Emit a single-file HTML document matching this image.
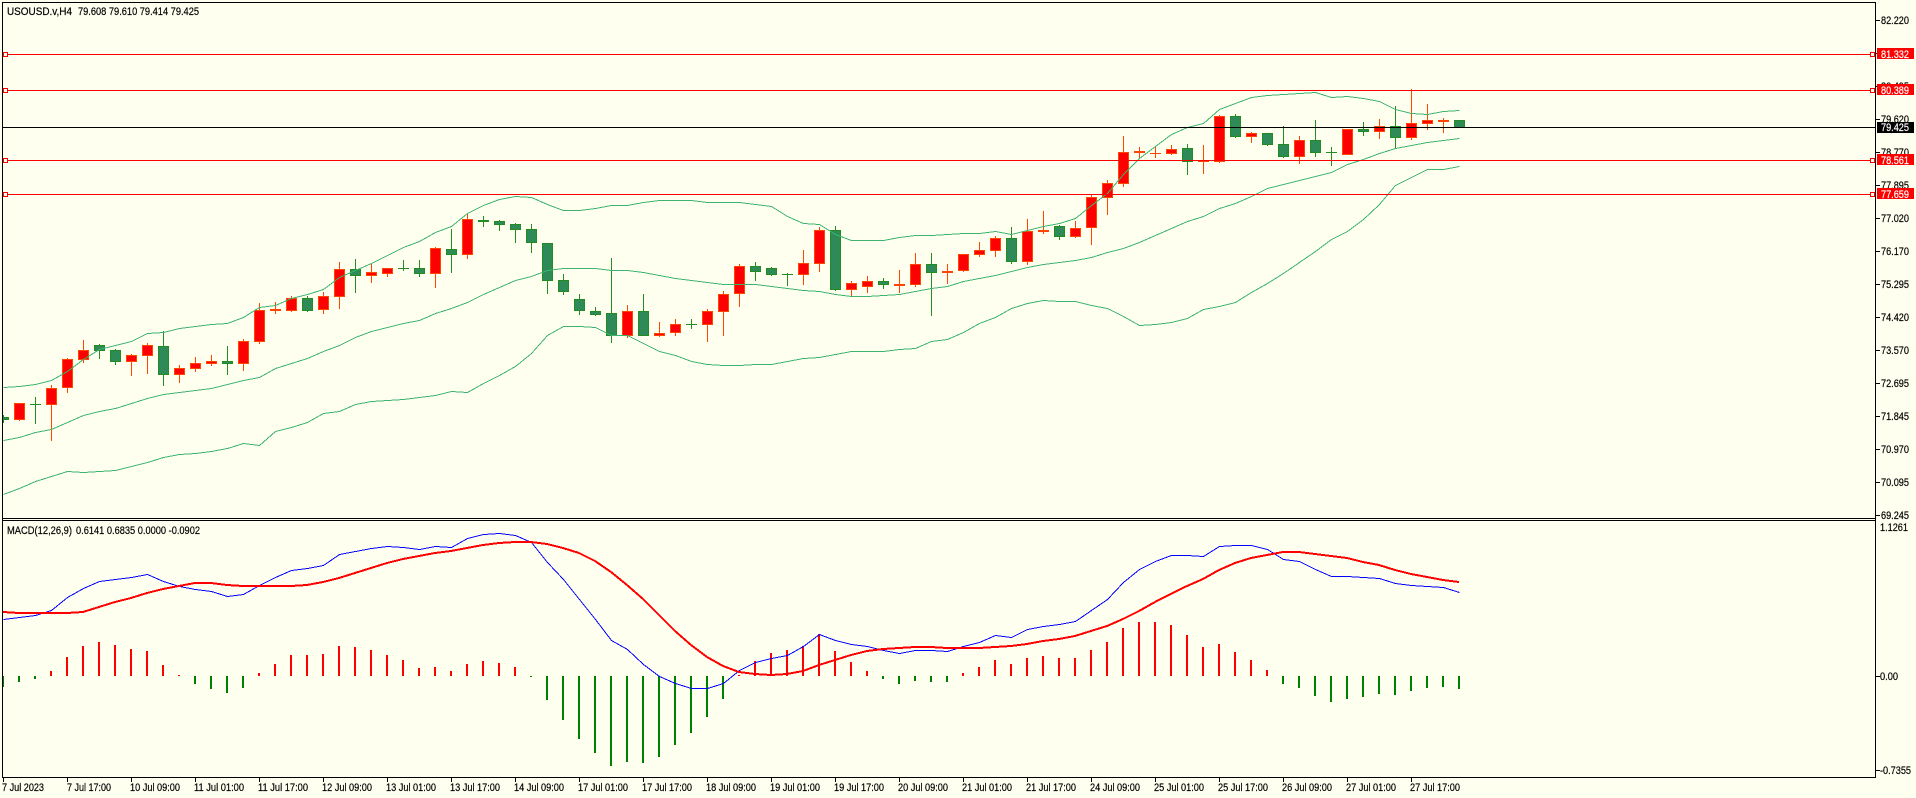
<!DOCTYPE html>
<html lang="en">
<head>
<meta charset="utf-8">
<title>USOUSD.v,H4</title>
<style>
html,body{margin:0;padding:0;background:#FFFFF0;width:1916px;height:798px;overflow:hidden}
svg{display:block}
text{font-family:"Liberation Sans",Arial,sans-serif;font-size:11px;fill:#000;stroke:#000;stroke-width:.2px}
.w text{fill:#fff;stroke:#fff}
</style>
</head>
<body>
<svg xmlns="http://www.w3.org/2000/svg" width="1916" height="798" viewBox="0 0 1916 798">
<defs>
<clipPath id="cm"><rect x="3" y="3" width="1872" height="515"/></clipPath>
<clipPath id="cd"><rect x="3" y="521" width="1872" height="256"/></clipPath>
</defs>
<rect width="1916" height="798" fill="#FFFFF0"/>

<g clip-path="url(#cm)" shape-rendering="crispEdges" fill="none">
<path stroke="#228B22" d="M3.5 415V423M35.5 397V424M99.5 344V359M115.5 349V365M163.5 331V386M227.5 346V375M307.5 296V312M355.5 259V293M403.5 260V271M419.5 260V277M451.5 229V273M483.5 216V227M499.5 220V231M515.5 223V243M531.5 224V253M547.5 243V294M563.5 274V295M579.5 294V315M595.5 307V316M611.5 258V343M643.5 294V336M691.5 319V329M755.5 262V281M771.5 267V276M787.5 273V286M835.5 226V291M883.5 278V289M931.5 253V316M1011.5 227V264M1059.5 225V240M1187.5 144V175M1235.5 114V138M1267.5 133V146M1283.5 126V158M1315.5 120V157M1331.5 147V166M1363.5 122V136M1395.5 106V148M1459.5 120V128M30 404.5h11M398 268.5h11M686 324.5h11M782 274.5h11M1326 152.5h11"/>
<path stroke="#FF4500" d="M19.5 403V421M51.5 385V441M67.5 358V393M83.5 340V363M131.5 354V376M147.5 343V374M179.5 365V383M195.5 357V372M211.5 355V366M243.5 339V371M259.5 303V344M275.5 302V314M291.5 296V312M323.5 292V314M339.5 262V309M371.5 263V283M387.5 268V277M435.5 247V288M467.5 213V259M627.5 305V338M659.5 322V337M675.5 319V336M707.5 309V342M723.5 291V336M739.5 264V307M803.5 250V285M819.5 227V272M851.5 281V296M867.5 276V293M899.5 270V293M915.5 253V287M947.5 264V284M963.5 254V272M979.5 242V257M995.5 236V257M1027.5 219V265M1043.5 211V234M1075.5 221V238M1091.5 194V245M1107.5 180V215M1123.5 136V187M1139.5 147V159M1155.5 146V158M1171.5 145V155M1203.5 145V174M1219.5 115V163M1251.5 132V143M1299.5 136V164M1347.5 129V155M1379.5 119V139M1411.5 89V140M1427.5 104V130M1443.5 118V133M1150 153.5h11M1198 161.5h11"/>
<path fill="#2E8B57" stroke="#228B22" d="M-1.5 417.5h10v2h-10zM94.5 345.5h10v5h-10zM110.5 350.5h10v11h-10zM158.5 346.5h10v28h-10zM222.5 361.5h10v2h-10zM302.5 298.5h10v12h-10zM350.5 269.5h10v6h-10zM414.5 268.5h10v5h-10zM446.5 249.5h10v5h-10zM478.5 220.5h10v1h-10zM494.5 221.5h10v3h-10zM510.5 224.5h10v5h-10zM526.5 229.5h10v13h-10zM542.5 243.5h10v37h-10zM558.5 280.5h10v11h-10zM574.5 299.5h10v11h-10zM590.5 311.5h10v3h-10zM606.5 313.5h10v22h-10zM638.5 311.5h10v24h-10zM750.5 266.5h10v5h-10zM766.5 268.5h10v6h-10zM830.5 230.5h10v59h-10zM878.5 281.5h10v3h-10zM926.5 264.5h10v8h-10zM1006.5 238.5h10v23h-10zM1054.5 226.5h10v10h-10zM1182.5 148.5h10v13h-10zM1230.5 116.5h10v20h-10zM1262.5 133.5h10v11h-10zM1278.5 144.5h10v12h-10zM1310.5 140.5h10v12h-10zM1358.5 129.5h10v2h-10zM1390.5 126.5h10v11h-10zM1454.5 120.5h10v7h-10z"/>
<path fill="#FF0000" stroke="#FF4500" d="M14.5 403.5h10v16h-10zM46.5 388.5h10v16h-10zM62.5 359.5h10v28h-10zM78.5 350.5h10v9h-10zM126.5 355.5h10v6h-10zM142.5 345.5h10v10h-10zM174.5 368.5h10v6h-10zM190.5 363.5h10v5h-10zM206.5 361.5h10v2h-10zM238.5 341.5h10v22h-10zM254.5 310.5h10v31h-10zM270.5 309.5h10v1h-10zM286.5 298.5h10v12h-10zM318.5 296.5h10v13h-10zM334.5 269.5h10v27h-10zM366.5 272.5h10v3h-10zM382.5 268.5h10v5h-10zM430.5 248.5h10v25h-10zM462.5 219.5h10v35h-10zM622.5 311.5h10v24h-10zM654.5 333.5h10v2h-10zM670.5 324.5h10v8h-10zM702.5 311.5h10v13h-10zM718.5 294.5h10v17h-10zM734.5 266.5h10v27h-10zM798.5 263.5h10v11h-10zM814.5 230.5h10v33h-10zM846.5 283.5h10v6h-10zM862.5 281.5h10v5h-10zM894.5 284.5h10v1h-10zM910.5 264.5h10v20h-10zM942.5 271.5h10v1h-10zM958.5 254.5h10v16h-10zM974.5 250.5h10v4h-10zM990.5 238.5h10v12h-10zM1022.5 231.5h10v30h-10zM1038.5 230.5h10v1h-10zM1070.5 228.5h10v8h-10zM1086.5 197.5h10v30h-10zM1102.5 183.5h10v14h-10zM1118.5 152.5h10v31h-10zM1134.5 151.5h10v1h-10zM1166.5 149.5h10v4h-10zM1214.5 116.5h10v45h-10zM1246.5 133.5h10v3h-10zM1294.5 140.5h10v16h-10zM1342.5 129.5h10v25h-10zM1374.5 126.5h10v5h-10zM1406.5 123.5h10v14h-10zM1422.5 120.5h10v3h-10zM1438.5 120.5h10v1h-10z"/>
<g stroke="#3CB371" transform="translate(.5 .5)">
<polyline points="3,387 19,386 35,384 51,380 67,371 83,359 99,349 115,345 131,341 147,333 163,332 179,328 195,326 211,324 227,323 243,317 259,307 275,305 291,298 307,294 323,289 339,277 355,270 371,263 387,255 403,247 419,241 435,232 451,226 467,213 483,205 499,199 515,196 531,197 547,204 563,210 579,210 595,208 611,205 627,205 643,202 659,200 675,200 691,200 707,202 723,202 739,202 755,204 771,206 787,216 803,223 819,224 835,234 851,240 867,240 883,240 899,237 915,235 931,235 947,234 963,233 979,233 995,231 1011,234 1027,230 1043,226 1059,223 1075,218 1091,205 1107,193 1123,174 1139,158 1155,146 1171,134 1187,127 1203,123 1219,109 1235,103 1251,97 1267,95 1283,94 1299,93 1315,92 1331,97 1347,96 1363,98 1379,101 1395,109 1411,113 1427,114 1443,111 1459,110"/>
<polyline points="3,440 19,437 35,432 51,429 67,422 83,415 99,411 115,408 131,403 147,398 163,394 179,392 195,390 211,388 227,384 243,380 259,377 275,368 291,363 307,358 323,351 339,345 355,337 371,331 387,327 403,323 419,320 435,313 451,308 467,302 483,294 499,287 515,280 531,276 547,270 563,268 579,268 595,268 611,270 627,270 643,272 659,275 675,278 691,280 707,282 723,284 739,284 755,284 771,286 787,288 803,290 819,291 835,294 851,296 867,296 883,295 899,294 915,291 931,288 947,286 963,281 979,278 995,275 1011,271 1027,267 1043,264 1059,262 1075,260 1091,257 1107,252 1123,248 1139,242 1155,235 1171,228 1187,221 1203,216 1219,208 1235,203 1251,196 1267,188 1283,184 1299,180 1315,176 1331,172 1347,164 1363,159 1379,153 1395,148 1411,145 1427,142 1443,140 1459,138"/>
<polyline points="3,494 19,488 35,481 51,476 67,471 83,472 99,471 115,470 131,466 147,462 163,457 179,454 195,453 211,451 227,448 243,443 259,445 275,431 291,427 307,422 323,413 339,411 355,404 371,401 387,400 403,399 419,397 435,395 451,391 467,392 483,383 499,375 515,366 531,353 547,335 563,326 579,326 595,327 611,335 627,335 643,343 659,351 675,355 691,361 707,364 723,365 739,365 755,364 771,364 787,361 803,358 819,357 835,354 851,351 867,351 883,351 899,349 915,348 931,341 947,339 963,332 979,323 995,317 1011,308 1027,303 1043,300 1059,301 1075,301 1091,305 1107,308 1123,316 1139,325 1155,324 1171,322 1187,318 1203,309 1219,306 1235,302 1251,292 1267,283 1283,273 1299,262 1315,251 1331,239 1347,231 1363,219 1379,204 1395,185 1411,177 1427,169 1443,169 1459,166"/>
</g>
<path stroke="#FF0000" d="M3 54.5H1875M3 90.5H1875M3 160.5H1875M3 194.5H1875"/>
<path stroke="#000" d="M3 127.5H1875"/>
<path fill="#FFFFF0" stroke="#FF0000" d="M3.5 52.5h4v4h-4zM3.5 88.5h4v4h-4zM3.5 158.5h4v4h-4zM3.5 192.5h4v4h-4zM1870.5 52.5h4v4h-4zM1870.5 88.5h4v4h-4zM1870.5 158.5h4v4h-4zM1870.5 192.5h4v4h-4z"/>
</g>

<g clip-path="url(#cd)" shape-rendering="crispEdges" fill="none">
<path stroke="#008000" stroke-width="2" d="M3 676V687M19 676V682M35 676V679M195 676V684M211 676V689M227 676V693M243 676V688M531 676V677M547 676V700M563 676V720M579 676V739M595 676V753M611 676V766M627 676V762M643 676V763M659 676V757M675 676V745M691 676V733M707 676V717M723 676V699M883 676V679M899 676V684M915 676V681M931 676V682M947 676V682M1283 676V684M1299 676V688M1315 676V696M1331 676V702M1347 676V699M1363 676V697M1379 676V694M1395 676V695M1411 676V691M1427 676V688M1443 676V687M1459 676V689"/>
<path stroke="#FF0000" stroke-width="2" d="M51 676V671M67 676V657M83 676V646M99 676V642M115 676V645M131 676V649M147 676V651M163 676V665M179 676V675M259 676V673M275 676V664M291 676V655M307 676V655M323 676V654M339 676V646M355 676V647M371 676V650M387 676V655M403 676V660M419 676V668M435 676V667M451 676V671M467 676V664M483 676V661M499 676V663M515 676V667M739 676V675M755 676V661M771 676V653M787 676V650M803 676V646M819 676V634M835 676V651M851 676V662M867 676V671M963 676V673M979 676V667M995 676V660M1011 676V664M1027 676V658M1043 676V656M1059 676V658M1075 676V658M1091 676V650M1107 676V642M1123 676V628M1139 676V622M1155 676V622M1171 676V625M1187 676V635M1203 676V647M1219 676V644M1235 676V652M1251 676V660M1267 676V670"/>
<polyline stroke="#0000FF" transform="translate(.5 .5)" points="3,619 19,617 35,615 51,610 67,597 83,588 99,581 115,579 131,577 147,574 163,581 179,586 195,589 211,591 227,596 243,594 259,585 275,577 291,570 307,568 323,565 339,554 355,551 371,548 387,546 403,547 419,549 435,546 451,547 467,538 483,534 499,533 515,535 531,542 547,562 563,579 579,599 595,619 611,640 627,649 643,664 659,676 675,683 691,688 707,688 723,683 739,670 755,662 771,658 787,655 803,646 819,634 835,640 851,644 867,646 883,650 899,653 915,650 931,650 947,651 963,646 979,642 995,635 1011,637 1027,629 1043,626 1059,624 1075,621 1091,610 1107,599 1123,582 1139,569 1155,561 1171,555 1187,555 1203,556 1219,546 1235,545 1251,545 1267,549 1283,559 1299,561 1315,569 1331,576 1347,576 1363,577 1379,578 1395,583 1411,585 1427,586 1443,587 1459,592"/>
<polyline stroke="#FF0000" stroke-width="2" points="3,612 19,613 35,613 51,613 67,613 83,612 99,607 115,602 131,598 147,593 163,589 179,586 195,583 211,583 227,585 243,586 259,586 275,586 291,586 307,585 323,582 339,578 355,573 371,568 387,563 403,559 419,556 435,553 451,551 467,548 483,545 499,543 515,542 531,542 547,544 563,548 579,553 595,561 611,572 627,585 643,599 659,615 675,631 691,645 707,657 723,666 739,672 755,674 771,675 787,674 803,671 819,665 835,660 851,655 867,651 883,649 899,648 915,647 931,647 947,648 963,648 979,648 995,647 1011,646 1027,644 1043,641 1059,639 1075,636 1091,631 1107,626 1123,619 1139,611 1155,602 1171,594 1187,586 1203,579 1219,570 1235,563 1251,558 1267,555 1283,552 1299,552 1315,554 1331,556 1347,558 1363,562 1379,565 1395,570 1411,574 1427,577 1443,580 1459,582"/>
</g>

<g shape-rendering="crispEdges" fill="none" stroke="#000">
<path d="M2 2.5H1876M2 518.5H1876M2 520.5H1876M2 777.5H1876M2.5 2V778M1875.5 2V778"/>
<path d="M1876 20.5h4M1876 53.5h4M1876 86.5h4M1876 119.5h4M1876 152.5h4M1876 185.5h4M1876 218.5h4M1876 251.5h4M1876 284.5h4M1876 317.5h4M1876 350.5h4M1876 383.5h4M1876 416.5h4M1876 449.5h4M1876 482.5h4M1876 515.5h4M1876 676.5h4M1876 770.5h4"/>
<path d="M3.5 778v4M67.5 778v4M131.5 778v4M195.5 778v4M259.5 778v4M323.5 778v4M387.5 778v4M451.5 778v4M515.5 778v4M579.5 778v4M643.5 778v4M707.5 778v4M771.5 778v4M835.5 778v4M899.5 778v4M963.5 778v4M1027.5 778v4M1091.5 778v4M1155.5 778v4M1219.5 778v4M1283.5 778v4M1347.5 778v4M1411.5 778v4"/>
</g>

<g>
<text x="7" y="15" textLength="65" lengthAdjust="spacingAndGlyphs">USOUSD.v,H4</text>
<text x="78" y="15" textLength="121" lengthAdjust="spacingAndGlyphs">79.608 79.610 79.414 79.425</text>
<text x="7" y="534" textLength="65" lengthAdjust="spacingAndGlyphs">MACD(12,26,9)</text>
<text x="76" y="534" textLength="124" lengthAdjust="spacingAndGlyphs">0.6141 0.6835 0.0000 -0.0902</text>
</g>

<g>
<text x="1881" y="24" textLength="28" lengthAdjust="spacingAndGlyphs">82.220</text>
<text x="1881" y="57" textLength="28" lengthAdjust="spacingAndGlyphs">81.345</text>
<text x="1881" y="90" textLength="28" lengthAdjust="spacingAndGlyphs">80.495</text>
<text x="1881" y="123" textLength="28" lengthAdjust="spacingAndGlyphs">79.620</text>
<text x="1881" y="156" textLength="28" lengthAdjust="spacingAndGlyphs">78.770</text>
<text x="1881" y="189" textLength="28" lengthAdjust="spacingAndGlyphs">77.895</text>
<text x="1881" y="222" textLength="28" lengthAdjust="spacingAndGlyphs">77.020</text>
<text x="1881" y="255" textLength="28" lengthAdjust="spacingAndGlyphs">76.170</text>
<text x="1881" y="288" textLength="28" lengthAdjust="spacingAndGlyphs">75.295</text>
<text x="1881" y="321" textLength="28" lengthAdjust="spacingAndGlyphs">74.420</text>
<text x="1881" y="354" textLength="28" lengthAdjust="spacingAndGlyphs">73.570</text>
<text x="1881" y="387" textLength="28" lengthAdjust="spacingAndGlyphs">72.695</text>
<text x="1881" y="420" textLength="28" lengthAdjust="spacingAndGlyphs">71.845</text>
<text x="1881" y="453" textLength="28" lengthAdjust="spacingAndGlyphs">70.970</text>
<text x="1881" y="486" textLength="28" lengthAdjust="spacingAndGlyphs">70.095</text>
<text x="1881" y="519" textLength="28" lengthAdjust="spacingAndGlyphs">69.245</text>
<text x="1880" y="531" textLength="28" lengthAdjust="spacingAndGlyphs">1.1261</text>
<text x="1880" y="680" textLength="18" lengthAdjust="spacingAndGlyphs">0.00</text>
<text x="1880" y="774" textLength="31" lengthAdjust="spacingAndGlyphs">-0.7355</text>
</g>

<g shape-rendering="crispEdges">
<rect x="1877" y="48" width="37" height="11" fill="#FF0000"/>
<rect x="1877" y="84" width="37" height="11" fill="#FF0000"/>
<rect x="1877" y="122" width="37" height="11" fill="#000"/>
<rect x="1877" y="154" width="37" height="11" fill="#FF0000"/>
<rect x="1877" y="188" width="37" height="11" fill="#FF0000"/>
</g>
<g class="w">
<text x="1881" y="58" textLength="28" lengthAdjust="spacingAndGlyphs">81.332</text>
<text x="1881" y="94" textLength="28" lengthAdjust="spacingAndGlyphs">80.389</text>
<text x="1881" y="131" textLength="28" lengthAdjust="spacingAndGlyphs">79.425</text>
<text x="1881" y="164" textLength="28" lengthAdjust="spacingAndGlyphs">78.561</text>
<text x="1881" y="198" textLength="28" lengthAdjust="spacingAndGlyphs">77.659</text>
</g>

<g>
<text x="2" y="791" textLength="42" lengthAdjust="spacingAndGlyphs">7 Jul 2023</text>
<text x="67" y="791" textLength="44" lengthAdjust="spacingAndGlyphs">7 Jul 17:00</text>
<text x="130" y="791" textLength="50" lengthAdjust="spacingAndGlyphs">10 Jul 09:00</text>
<text x="194" y="791" textLength="50" lengthAdjust="spacingAndGlyphs">11 Jul 01:00</text>
<text x="258" y="791" textLength="50" lengthAdjust="spacingAndGlyphs">11 Jul 17:00</text>
<text x="322" y="791" textLength="50" lengthAdjust="spacingAndGlyphs">12 Jul 09:00</text>
<text x="386" y="791" textLength="50" lengthAdjust="spacingAndGlyphs">13 Jul 01:00</text>
<text x="450" y="791" textLength="50" lengthAdjust="spacingAndGlyphs">13 Jul 17:00</text>
<text x="514" y="791" textLength="50" lengthAdjust="spacingAndGlyphs">14 Jul 09:00</text>
<text x="578" y="791" textLength="50" lengthAdjust="spacingAndGlyphs">17 Jul 01:00</text>
<text x="642" y="791" textLength="50" lengthAdjust="spacingAndGlyphs">17 Jul 17:00</text>
<text x="706" y="791" textLength="50" lengthAdjust="spacingAndGlyphs">18 Jul 09:00</text>
<text x="770" y="791" textLength="50" lengthAdjust="spacingAndGlyphs">19 Jul 01:00</text>
<text x="834" y="791" textLength="50" lengthAdjust="spacingAndGlyphs">19 Jul 17:00</text>
<text x="898" y="791" textLength="50" lengthAdjust="spacingAndGlyphs">20 Jul 09:00</text>
<text x="962" y="791" textLength="50" lengthAdjust="spacingAndGlyphs">21 Jul 01:00</text>
<text x="1026" y="791" textLength="50" lengthAdjust="spacingAndGlyphs">21 Jul 17:00</text>
<text x="1090" y="791" textLength="50" lengthAdjust="spacingAndGlyphs">24 Jul 09:00</text>
<text x="1154" y="791" textLength="50" lengthAdjust="spacingAndGlyphs">25 Jul 01:00</text>
<text x="1218" y="791" textLength="50" lengthAdjust="spacingAndGlyphs">25 Jul 17:00</text>
<text x="1282" y="791" textLength="50" lengthAdjust="spacingAndGlyphs">26 Jul 09:00</text>
<text x="1346" y="791" textLength="50" lengthAdjust="spacingAndGlyphs">27 Jul 01:00</text>
<text x="1410" y="791" textLength="50" lengthAdjust="spacingAndGlyphs">27 Jul 17:00</text>
</g>
</svg>
</body>
</html>
